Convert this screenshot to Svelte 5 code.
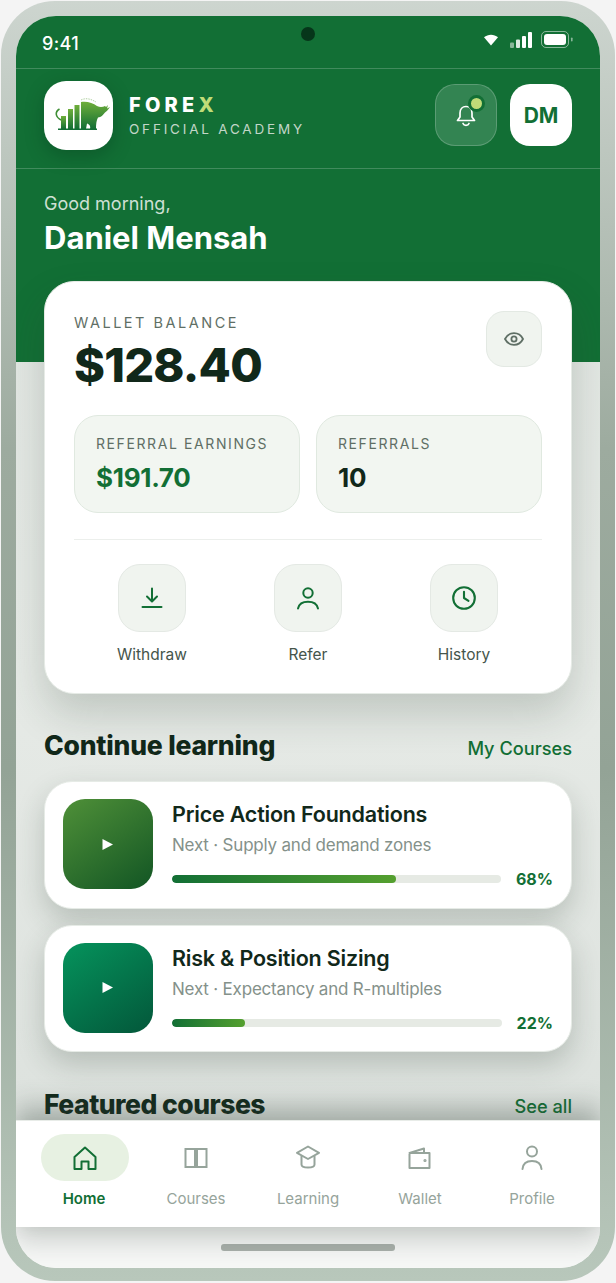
<script>
  const courses = [
    { title: 'Price Action Foundations', next: 'Next · Supply and demand zones', pct: 68, tone: 'a' },
    { title: 'Risk & Position Sizing', next: 'Next · Expectancy and R-multiples', pct: 22, tone: 'b' }
  ];
</script>

<div class="page">
  <div class="phone">
    <div class="screen">
      <div class="camera"></div>
      <main class="scroll">
        <section class="hero">
          <div class="status">
            <span class="time">9:41</span>
            <div class="status-icons">
              <svg width="16" height="12" viewBox="0 0 16 12"><path d="M1 3.2C5 -.2 11 -.2 15 3.2L8 11.5Z" fill="#fff"/></svg>
              <svg width="24" height="16" viewBox="0 0 24 16"><rect x="0" y="10.5" width="4" height="5.5" rx="1" fill="#fff" opacity=".5"/><rect x="6" y="7.5" width="4" height="8.5" rx="1" fill="#fff" opacity=".85"/><rect x="12" y="4" width="4" height="12" rx="1" fill="#fff"/><rect x="18" y="0" width="4" height="16" rx="1" fill="#fff"/></svg>
              <svg width="33" height="18" viewBox="0 0 33 18"><rect x=".5" y=".5" width="27" height="16" rx="4.5" fill="none" stroke="#fff" stroke-opacity=".5"/><rect x="3" y="3" width="22" height="11" rx="3" fill="#fff"/><rect x="30" y="6.5" width="1.6" height="4" rx=".8" fill="#fff" opacity=".5"/></svg>
            </div>
          </div>
          <header class="brandbar">
            <div class="logo">
              <svg width="68" height="68" viewBox="0 0 68 68">
                <defs>
                  <linearGradient id="bull" x1="0" y1="0" x2="0" y2="1"><stop offset="0" stop-color="#6fae3a"/><stop offset="1" stop-color="#126f35"/></linearGradient>
                </defs>
                <path d="M16 38C10.500 35 9.500 30 14.500 27" fill="none" stroke="#3f8f35" stroke-width="1.600"/>
                <rect x="16" y="34" width="5" height="13" fill="url(#bull)"/>
                <rect x="23" y="27" width="5" height="20" fill="url(#bull)"/>
                <rect x="29.500" y="23" width="5" height="24" fill="url(#bull)"/>
                <path d="M36 20C42 19 48 21 52 24C55 25.500 58 25 60 24L61 25L63 23L62 26.500L65 25C63 28 61 30 60 30.500C58 33 56 35.500 53 35.500C51.500 38 51 42 51 47H45C46 44 44 42 42 41.500L41 47H36Z" fill="url(#bull)"/>
                <path d="M36 18C41 15.500 46 17 51 20" fill="none" stroke="#9cc48a" stroke-width=".8" stroke-dasharray="1.500 1"/>
                <rect x="13" y="46.500" width="39" height="1.500" fill="#126f35"/>
              </svg>
            </div>
            <div class="brandtext">
              <div class="forex">FORE<span>X</span></div>
              <div class="academy">OFFICIAL ACADEMY</div>
            </div>
            <div class="bell">
              <svg width="24" height="26" viewBox="0 0 24 26" fill="none" stroke="#fff" stroke-width="1.700" stroke-linecap="round" stroke-linejoin="round"><path d="M6 15V11C6 7 8.500 4.500 12 4.500S18 7 18 11V15L20.500 18.500H3.500Z"/><path d="M9 21.500C10 24 14 24 15 21.500"/></svg>
              <span class="dot"></span>
            </div>
            <div class="avatar">DM</div>
          </header>
          <div class="greeting">
            <div class="hello">Good morning,</div>
            <h1>Daniel Mensah</h1>
          </div>
        </section>

        <section class="wallet">
          <div class="wallet-top">
            <div>
              <div class="label wl">WALLET BALANCE</div>
              <div class="balance">$128.40</div>
            </div>
            <div class="eye">
              <svg width="22" height="22" viewBox="0 0 22 22" fill="none" stroke="#5f6f65" stroke-width="1.800"><path d="M2 11C4 7 7 5.200 11 5.200S18 7 20 11C18 15 15 16.800 11 16.800S4 15 2 11Z"/><circle cx="11" cy="11" r="2.600"/></svg>
            </div>
          </div>
          <div class="tiles">
            <div class="tile">
              <div class="label">REFERRAL EARNINGS</div>
              <div class="value green">$191.70</div>
            </div>
            <div class="tile">
              <div class="label">REFERRALS</div>
              <div class="value">10</div>
            </div>
          </div>
          <div class="actions">
            <div class="action">
              <div class="action-icon"><svg width="24" height="24" viewBox="0 0 24 24" fill="none" stroke="#126f35" stroke-width="2" stroke-linecap="round" stroke-linejoin="round"><path d="M12 2.500V15M7 10.500L12 15.500L17 10.500M2.500 21H21.500"/></svg></div>
              <span>Withdraw</span>
            </div>
            <div class="action">
              <div class="action-icon"><svg width="24" height="24" viewBox="0 0 24 24" fill="none" stroke="#126f35" stroke-width="2" stroke-linecap="round"><circle cx="12" cy="7" r="4.700"/><path d="M2 22.500C3 18 7 15.800 12 15.800S21 18 22 22.500"/></svg></div>
              <span>Refer</span>
            </div>
            <div class="action">
              <div class="action-icon"><svg width="24" height="24" viewBox="0 0 24 24" fill="none" stroke="#126f35" stroke-width="2.100" stroke-linecap="round" stroke-linejoin="round"><circle cx="12" cy="12" r="10.800"/><path d="M12 5.800V12L16.500 14.800"/></svg></div>
              <span>History</span>
            </div>
          </div>
        </section>

        <div class="section-head first">
          <h2>Continue learning</h2>
          <span class="more">My Courses</span>
        </div>

        <div class="courses">
          {#each courses as c}
            <article class="course">
              <div class="thumb {c.tone}">
                <svg width="12" height="13" viewBox="0 0 12 13"><path d="M.5 1V12L11 6.500Z" fill="#fff"/></svg>
              </div>
              <div class="course-body">
                <h3>{c.title}</h3>
                <p>{c.next}</p>
                <div class="progress">
                  <div class="track"><div class="fill" style="width:{c.pct}%"></div></div>
                  <b>{c.pct}%</b>
                </div>
              </div>
            </article>
          {/each}
        </div>

        <div class="section-head second">
          <h2 class="tight">Featured courses</h2>
          <span class="more">See all</span>
        </div>
      </main>

      <nav class="nav">
        <div class="item active">
          <div class="pill"><svg width="26" height="26" viewBox="0 0 26 26" fill="none" stroke="#126f35" stroke-width="2" stroke-linejoin="round"><path d="M2.500 12L13 2.500L23.500 12V24H16.500V16.500H9.500V24H2.500Z"/></svg></div>
          <span>Home</span>
        </div>
        <div class="item">
          <div class="pill"><svg width="26" height="26" viewBox="0 0 26 26" fill="none" stroke="#96a49b" stroke-width="2"><rect x="2.500" y="4" width="9.500" height="18"/><rect x="14" y="4" width="9.500" height="18"/></svg></div>
          <span>Courses</span>
        </div>
        <div class="item">
          <div class="pill"><svg width="26" height="26" viewBox="0 0 26 26" fill="none" stroke="#96a49b" stroke-width="2" stroke-linejoin="round"><path d="M13 1.500L24 7.800L13 14L2 7.800Z"/><path d="M6.500 11V19.500C6.500 23.500 19.500 23.500 19.500 19.500V11"/></svg></div>
          <span>Learning</span>
        </div>
        <div class="item">
          <div class="pill"><svg width="26" height="26" viewBox="0 0 26 26" fill="none" stroke="#96a49b" stroke-width="2" stroke-linejoin="round"><path d="M2.500 9V23H22.500V8H2.500L17 3.500V8"/><circle cx="18" cy="15.500" r=".6" fill="#96a49b"/></svg></div>
          <span>Wallet</span>
        </div>
        <div class="item">
          <div class="pill"><svg width="26" height="26" viewBox="0 0 26 26" fill="none" stroke="#96a49b" stroke-width="2" stroke-linecap="round"><circle cx="13" cy="6.500" r="5"/><path d="M3.500 24C4 18.500 8 16 13 16S22 18.500 22.500 24"/></svg></div>
          <span>Profile</span>
        </div>
      </nav>

      <div class="home-zone"><div class="indicator"></div></div>
    </div>
  </div>
</div>

<style>
  :global(body) { margin: 0; background: #f4f4f4; }
  * { box-sizing: border-box; }
  .page {
    width: 616px; height: 1283px; padding: 1px;
    font-family: "Inter", "Noto Sans", sans-serif;
    color: #11281a;
  }
  .phone {
    width: 614px; height: 1280px; padding: 15px 15px 14px;
    border-radius: 54px;
    background: linear-gradient(180deg, #cdd5cf 0%, #9dab9f 35%, #93a396 60%, #b8c7bb 100%);
  }
  .screen {
    position: relative; width: 584px; height: 1252px;
    border-radius: 40px; overflow: hidden;
    display: flex; flex-direction: column;
    background: #eef1ee;
  }
  .camera {
    position: absolute; left: 285px; top: 11px; width: 14px; height: 14px;
    border-radius: 50%; background: #06361a;
  }
  .scroll { height: 1104px; overflow: hidden; flex: none;
    background: linear-gradient(180deg, #dfe4e0 0%, #e6eae6 60%, #dde2de 100%); }

  .hero { height: 346px; background: #126f35; color: #fff; }
  .status {
    height: 53px; padding: 0 27px 0 26px; border-bottom: 1px solid rgba(255,255,255,.2);
    display: flex; align-items: center; justify-content: space-between;
  }
  .time { font-size: 18px; font-weight: 500; letter-spacing: .4px; padding-top: 2px; }
  .status-icons { display: flex; align-items: center; gap: 11px; margin-top: -4px; }
  .status-icons svg:last-child { margin-left: -4px; margin-right: -1px; }
  .brandbar {
    height: 100px; padding: 12px 28px 0; border-bottom: 1px solid rgba(255,255,255,.2);
    display: flex; align-items: flex-start;
  }
  .logo {
    width: 69px; height: 69px; border-radius: 22px; background: #fff; flex: none;
    box-shadow: 0 6px 18px rgba(6,54,26,.35);
    display: flex; align-items: center; justify-content: center;
  }
  .brandtext { margin-left: 16px; flex: 1; padding-top: 12px; }
  .forex { font-weight: 800; font-size: 20px; letter-spacing: 4.2px; line-height: 24px; }
  .forex span { color: #c1dc78; }
  .academy { font-size: 13.5px; letter-spacing: 2.8px; line-height: 20px; color: #c2d6c8; margin-top: 2px; }
  .bell {
    position: relative; width: 62px; height: 62px; margin-top: 3px; border-radius: 20px;
    background: #338452; border: 1.5px solid rgba(255,255,255,.2);
    display: flex; align-items: center; justify-content: center;
  }
  .dot {
    position: absolute; left: 32px; top: 10px; width: 17px; height: 17px; border-radius: 50%;
    background: #c1dc78; border: 3.5px solid #126f35;
  }
  .avatar {
    width: 62px; height: 62px; margin: 3px 0 0 13px; border-radius: 20px; background: #fff;
    color: #126f35; font-weight: 700; font-size: 21px;
    display: flex; align-items: center; justify-content: center;
  }
  .greeting { padding: 24px 28px 0; }
  .hello { font-size: 18px; line-height: 22px; color: #cfe0d4; font-weight: 400; }
  h1 { margin: 4px 0 0; font-size: 31px; line-height: 38px; font-weight: 700; color: #fff; }

  .wallet {
    position: relative; margin: -81px 28px 0; height: 413px; padding: 29px 29px 0;
    background: #fff; border-radius: 30px; border: 1px solid #e6ebe6;
    box-shadow: 0 20px 40px rgba(40,60,45,.2);
  }
  .wallet-top { display: flex; justify-content: space-between; align-items: flex-start; height: 104px; }
  .label { font-size: 14px; letter-spacing: 1.6px; line-height: 20px; color: #5f6f65; font-weight: 400; }
  .wl { font-size: 14.5px; letter-spacing: 2.5px; margin-top: 2px; }
  .balance { font-size: 47px; line-height: 56px; font-weight: 800; letter-spacing: -.8px; color: #11281a; margin-top: 4px; }
  .eye {
    width: 56px; height: 56px; border-radius: 18px; background: #f0f4ef; border: 1px solid #e3e9e3;
    display: flex; align-items: center; justify-content: center;
  }
  .tiles { display: grid; grid-template-columns: 226px 226px; gap: 16px; padding-bottom: 26px; border-bottom: 1px solid #ecefec; }
  .tile { height: 98px; padding: 18px 21px 0; background: #f2f6f1; border: 1.500px solid #e0e9e0; border-radius: 24px; }
  .value { font-size: 26px; line-height: 34px; font-weight: 700; margin-top: 7px; color: #11281a; letter-spacing: -.3px; }
  .green { color: #126f35; }
  .actions { display: grid; grid-template-columns: repeat(3, 156px); padding-top: 24px; }
  .action { display: flex; flex-direction: column; align-items: center; }
  .action-icon {
    width: 68px; height: 68px; border-radius: 22px; background: #f0f4ef; border: 1px solid #e4e9e4;
    display: flex; align-items: center; justify-content: center;
  }
  .action span { font-size: 15.5px; line-height: 20px; color: #45554b; margin-top: 13px; font-weight: 400; }

  .section-head { display: flex; justify-content: space-between; align-items: center; padding: 0 28px; }
  .first { margin-top: 33px; height: 36px; }
  .second { margin-top: 34px; height: 36px; }
  h2 { margin: 0; font-size: 26.5px; font-weight: 800; line-height: 36px; color: #11281a; letter-spacing: -.2px; }
  h2.tight { letter-spacing: -.5px; }
  .more { font-size: 18.2px; font-weight: 500; color: #126f35; padding-top: 5px; }

  .courses { display: flex; flex-direction: column; gap: 16px; margin: 18.3px 28px 0; }
  .course {
    height: 127.3px; padding: 17px 18px; display: flex; gap: 19px;
    background: #fff; border: 1px solid #e6ebe6; border-radius: 28px;
    box-shadow: 0 12px 28px rgba(40,60,45,.22);
  }
  .thumb {
    width: 90px; height: 90px; flex: none; border-radius: 22px;
    display: flex; align-items: center; justify-content: center;
  }
  .a { background: linear-gradient(145deg, #4f9038, #125524); }
  .b { background: linear-gradient(145deg, #05935c, #03573a); }
  .course-body { flex: 1; min-width: 0; }
  h3 { margin: 1px 0 0; font-size: 21.5px; line-height: 28px; font-weight: 600; color: #11281a; letter-spacing: -.2px; }
  .course p { margin: 5px 0 0; font-size: 17px; line-height: 24px; color: #84918a; letter-spacing: -.2px; }
  .progress { display: flex; align-items: center; gap: 15px; margin-top: 11px; height: 22px; }
  .track { flex: 1; height: 8px; border-radius: 4px; background: #e6eae4; overflow: hidden; }
  .fill { height: 100%; border-radius: 4px; background: linear-gradient(90deg, #126f35, #55a02f); }
  .progress b { font-size: 16px; font-weight: 700; color: #126f35; }

  .nav {
    position: relative; height: 107px; flex: none; padding: 13px 12px 0; background: #fff;
    display: grid; grid-template-columns: repeat(5, 112px);
    box-shadow: 0 -14px 24px rgba(60,75,65,.32), 0 14px 24px rgba(60,75,65,.22);
    border-top: 1px solid #e8ece8;
  }
  .item { display: flex; flex-direction: column; align-items: center; }
  .pill { width: 88px; height: 47px; border-radius: 24px; display: flex; align-items: center; justify-content: center; }
  .active .pill { background: #e7f1e2; margin-left: 2px; }
  .item span { font-size: 15px; line-height: 20px; margin-top: 8px; color: #96a49b; }
  .active span { color: #126f35; font-weight: 600; }

  .home-zone {
    flex: 1; background: #f6f7f6; display: flex; justify-content: center; padding-top: 17px;
  }
  .indicator { width: 174px; height: 6.5px; border-radius: 3px; background: #a9b0ab; }
</style>
